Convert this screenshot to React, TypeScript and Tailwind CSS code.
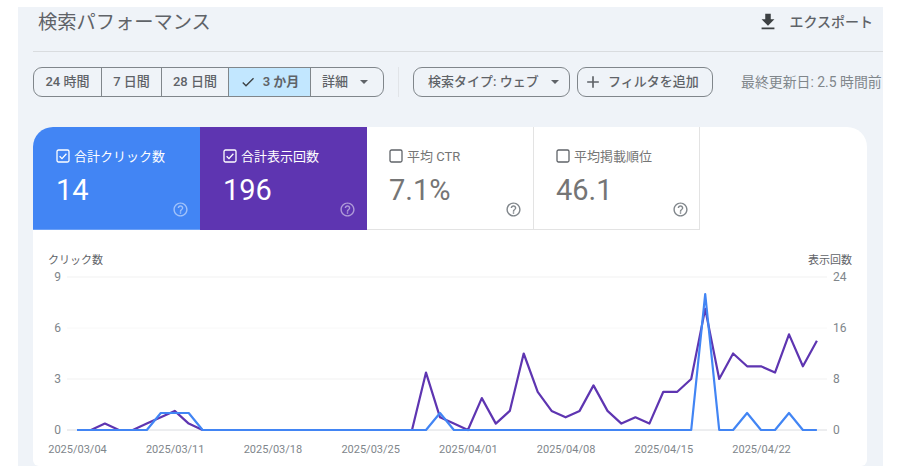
const FONT = '[font-family:Roboto,"Noto_Sans_CJK_JP",sans-serif]'

const HELP_PATH =
  'M11 18h2v-2h-2v2zm1-16C6.48 2 2 6.48 2 12s4.48 10 10 10 10-4.48 10-10S17.52 2 12 2zm0 18c-4.41 0-8-3.59-8-8s3.59-8 8-8 8 3.59 8 8-3.59 8-8 8zm0-14c-2.21 0-4 1.79-4 4h2c0-1.1.9-2 2-2s2 .9 2 2c0 2-3 1.75-3 5h2c0-2.25 3-2.5 3-5 0-2.21-1.79-4-4-4z'

// One value per day, read off the reference (sums give the 14 / 196 totals)
const clicks = [
  0, 0, 0, 0, 0, 0, 1, 1, 1, 0, 0, 0, 0, 0, 0, 0, 0, 0, 0, 0, 0, 0, 0, 0, 0, 0, 1, 0, 0, 0, 0, 0, 0, 0, 0, 0, 0, 0, 0,
  0, 0, 0, 0, 0, 0, 8, 0, 0, 1, 0, 0, 1, 0, 0,
]
const impressions = [
  0, 0, 1, 0, 0, 1, 2, 3, 1, 0, 0, 0, 0, 0, 0, 0, 0, 0, 0, 0, 0, 0, 0, 0, 0, 9, 2, 1, 0, 5, 1, 3, 12, 6, 3, 2, 3, 7, 3,
  1, 2, 1, 6, 6, 8, 19, 8, 12, 10, 10, 9, 15, 10, 14,
]

const dates = ['2025/03/04', '2025/03/11', '2025/03/18', '2025/03/25', '2025/04/01', '2025/04/08', '2025/04/15', '2025/04/22']

const X0 = 77
const STEP = 13.96
const Y0 = 430
const TOP = 277

function toPoints(values: number[], max: number) {
  return values.map((v, i) => `${(X0 + i * STEP).toFixed(1)},${(Y0 - (v / max) * (Y0 - TOP)).toFixed(1)}`).join(' ')
}

function Checkbox({ checked, className }: { checked: boolean; className: string }) {
  return (
    <svg viewBox="0 0 14 14" className={`h-[14px] w-[14px] shrink-0 ${className}`} fill="none" stroke="currentColor">
      <rect x="1" y="1" width="12" height="12" rx="1.5" strokeWidth="1.3" />
      {checked && <path d="M3.6 7.2l2.4 2.4 4.4-4.8" strokeWidth="1.3" />}
    </svg>
  )
}

function MetricCard({
  label,
  value,
  checked,
  className,
  helpClassName,
  checkClassName,
}: {
  label: string
  value: string
  checked: boolean
  className: string
  helpClassName: string
  checkClassName: string
}) {
  return (
    <div className={`relative h-[103px] pt-[21px] ${className}`}>
      <div className="flex h-[16px] items-center gap-[4px] text-[13px] leading-none">
        <Checkbox checked={checked} className={checkClassName} />
        <span>{label}</span>
      </div>
      <div className="mt-[10px] text-[29px] leading-[32px]">{value}</div>
      <svg viewBox="0 0 24 24" className={`absolute bottom-[11px] h-[17px] w-[17px] ${helpClassName}`} fill="currentColor">
        <path d={HELP_PATH} />
      </svg>
    </div>
  )
}

function Segment({ children, className = '' }: { children: React.ReactNode; className?: string }) {
  return (
    <div className={`flex h-full items-center justify-center border-r border-[#80868b] text-[13px] font-medium text-[#5f6368] ${className}`}>
      {children}
    </div>
  )
}

function Caret() {
  return <span className="h-0 w-0 border-x-[4px] border-t-[4px] border-x-transparent border-t-[#5f6368]" />
}

function Chart() {
  const yLeft = [0, 3, 6, 9]
  const yRight = [0, 8, 16, 24]
  return (
    <svg viewBox="33 268 834 198" className="block h-[198px] w-[834px]" style={{ fontFamily: 'Roboto, sans-serif' }}>
      {yLeft.map((v, i) => {
        const y = Y0 - (i * (Y0 - TOP)) / 3
        return (
          <g key={v}>
            <line x1="67" x2="827" y1={y} y2={y} stroke={i === 0 ? '#dadce0' : i === 2 ? '#f8f8f8' : '#f1f1f1'} strokeWidth="1" />
            <text x="61" y={y + 4} textAnchor="end" fontSize="12" fill="#80868b">
              {v}
            </text>
            <text x="833" y={y + 4} fontSize="12" fill="#80868b">
              {yRight[i]}
            </text>
          </g>
        )
      })}
      {dates.map((d, i) => (
        <text key={d} x={X0 + i * 7 * STEP + 0.5} y="453" textAnchor="middle" fontSize="11" fill="#80868b">
          {d}
        </text>
      ))}
      <polyline points={toPoints(impressions, 24)} fill="none" stroke="#5e35b1" strokeWidth="2.2" strokeLinejoin="round" />
      <polyline points={toPoints(clicks, 9)} fill="none" stroke="#4285f4" strokeWidth="2.2" strokeLinejoin="round" />
    </svg>
  )
}

export default function App() {
  return (
    <div className={`h-[475px] w-[897px] overflow-hidden bg-white pl-[18px] pt-[7px] ${FONT}`}>
      <div className="h-[459px] w-[865px] bg-[#eff3f8] pl-[15px]">
        {/* header */}
        <div className="flex h-[45px] items-start justify-between border-b border-[#d9dcdf] pr-[10px]">
          <h1 className="pl-[5px] pt-[2px] text-[19.25px] font-normal leading-[28px] text-[#5f6368]">検索パフォーマンス</h1>
          <div className="flex items-center gap-[10px] pt-[4px] text-[14px] font-medium leading-[20px] text-[#5f6368]">
            <svg viewBox="0 0 24 24" className="h-[22px] w-[22px] text-[#3c4043]" fill="currentColor">
              <path d="M19 9h-4V3H9v6H5l7 7 7-7zM5 18v2h14v-2H5z" />
            </svg>
            <span>エクスポート</span>
          </div>
        </div>

        {/* filter bar */}
        <div className="mt-[15px] flex h-[30px] items-center">
          <div className="flex h-full w-[351px] overflow-hidden rounded-[9px] border border-[#80868b]">
            <Segment className="w-[68px]">24 時間</Segment>
            <Segment className="w-[60px]">7 日間</Segment>
            <Segment className="w-[67px]">28 日間</Segment>
            <Segment className="w-[82px] gap-[7px] bg-[#c2e7ff] font-semibold text-[#3c4043]">
              <svg viewBox="0 0 24 24" className="h-[16px] w-[16px]" fill="#3c4043">
                <path d="M9 16.17L4.83 12l-1.41 1.41L9 19 21 7l-1.41-1.41z" />
              </svg>
              <span>3 か月</span>
            </Segment>
            <div className="flex h-full flex-1 items-center gap-[12px] pl-[11px] text-[13px] font-medium text-[#5f6368]">
              <span>詳細</span>
              <Caret />
            </div>
          </div>
          <div className="ml-[14px] h-full w-px bg-[#e1e4e8]" />
          <div className="ml-[14px] flex h-full w-[157px] items-center gap-[12px] rounded-[9px] border border-[#80868b] pl-[14px] text-[13px] font-medium text-[#5f6368]">
            <span>検索タイプ: ウェブ</span>
            <Caret />
          </div>
          <div className="ml-[7px] flex h-full w-[136px] items-center gap-[5px] rounded-[9px] border border-[#80868b] pl-[5px] text-[13px] font-medium text-[#5f6368]">
            <svg viewBox="0 0 24 24" className="h-[20px] w-[20px]" fill="#5f6368">
              <path d="M19 13h-6v6h-2v-6H5v-2h6V5h2v6h6v2z" />
            </svg>
            <span>フィルタを追加</span>
          </div>
          <span className="ml-[28px] whitespace-nowrap text-[13.9px] text-[#80868b]">最終更新日: 2.5 時間前</span>
        </div>

        {/* performance card */}
        <div className="mt-[30px] h-[339px] w-[834px] overflow-hidden rounded-t-[20px] rounded-b-[6px] bg-white">
          <div className="flex">
            <MetricCard
              label="合計クリック数"
              value="14"
              checked
              className="w-[167px] border-b border-[#6ba0f6] bg-[#4285f4] pl-[23px] text-white"
              helpClassName="right-[11px] text-white/50"
              checkClassName="text-white"
            />
            <MetricCard
              label="合計表示回数"
              value="196"
              checked
              className="w-[167px] border-b border-[#5e35b1] bg-[#5e35b1] pl-[23px] text-white"
              helpClassName="right-[11px] text-white/50"
              checkClassName="text-white"
            />
            <MetricCard
              label="平均 CTR"
              value="7.1%"
              checked={false}
              className="w-[167px] border-b border-r border-[#e3e3e3] pl-[22px] text-[#757575]"
              helpClassName="right-[11px] text-[#80868b]"
              checkClassName="text-[#5f6368]"
            />
            <MetricCard
              label="平均掲載順位"
              value="46.1"
              checked={false}
              className="w-[166px] border-b border-r border-[#e3e3e3] pl-[22px] text-[#757575]"
              helpClassName="right-[10px] text-[#80868b]"
              checkClassName="text-[#5f6368]"
            />
          </div>
          <div className="flex justify-between pl-[15px] pr-[15px] pt-[23px] text-[11px] leading-[15px] text-[#5f6368]">
            <span>クリック数</span>
            <span>表示回数</span>
          </div>
          <Chart />
        </div>
      </div>
    </div>
  )
}
